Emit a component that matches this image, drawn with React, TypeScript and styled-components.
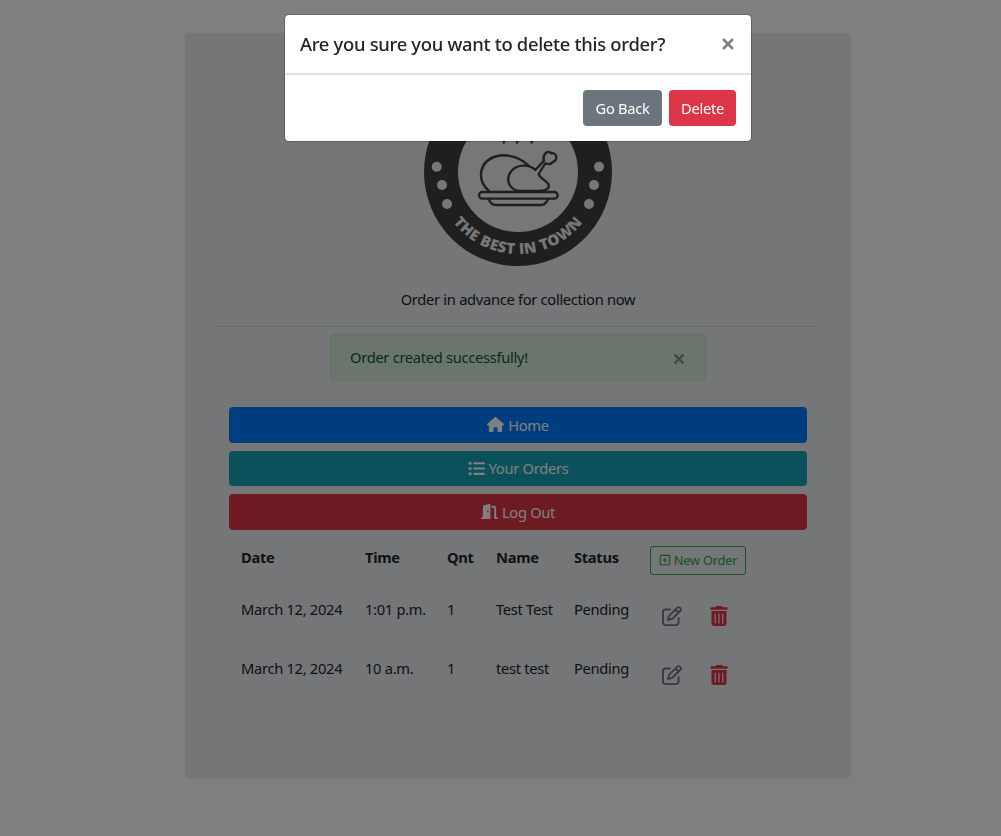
import styled, { createGlobalStyle } from "styled-components"
import { FaDoorOpen, FaHouse, FaListUl, FaRegPenToSquare, FaRegSquarePlus, FaTrashCan } from "react-icons/fa6"

const GlobalStyle = createGlobalStyle`
  html, body {
    margin: 0;
    background: #fff;
    color: #212529;
    font-family: "Noto Sans", "Open Sans", sans-serif;
    font-size: 14.7px;
    letter-spacing: -0.3px;
    line-height: 24px;
  }
`

const Backdrop = styled.div`
  position: fixed;
  inset: 0;
  background: rgba(0, 0, 0, 0.5);
`

const Modal = styled.div`
  position: fixed;
  top: 14px;
  left: 284px;
  width: 468px;
  box-sizing: border-box;
  background: #fff;
  border: 1px solid rgba(0, 0, 0, 0.2);
  border-radius: 5px;
  background-clip: padding-box;
`

const ModalHeader = styled.div`
  display: flex;
  justify-content: space-between;
  align-items: center;
  height: 58px;
  padding: 0 15px;
  border-bottom: 1px solid #dee2e6;
`

const ModalTitle = styled.h5`
  margin: 0;
  font-size: 18.4px;
  font-weight: 500;
  letter-spacing: -0.3px;
  line-height: 30px;
`

const ModalFooter = styled.div`
  display: flex;
  justify-content: flex-end;
  gap: 7px;
  padding: 15px;
  border-top: 1px solid #dee2e6;
`

const ModalButton = styled.button<{ $bg: string; $w: number }>`
  width: ${(p) => p.$w}px;
  height: 36px;
  padding: 0;
  border: 0;
  border-radius: 4px;
  background: ${(p) => p.$bg};
  color: #fff;
  font: inherit;
  letter-spacing: inherit;
`

const CloseIcon = styled.svg<{ $size: number }>`
  display: block;
  width: ${(p) => p.$size}px;
  height: ${(p) => p.$size}px;
  fill: none;
  stroke: currentColor;
  stroke-width: 2.6;
`

const CloseButton = styled.span`
  color: #808080;
`

const Card = styled.main`
  box-sizing: border-box;
  width: 666px;
  height: 746px;
  margin: 33px 150px 0 185px;
  padding: 45px 31px 0;
  background: #e9ecef;
  border-radius: 5px;
  display: flex;
  flex-direction: column;
  align-items: center;
`

const Logo = styled.svg`
  display: block;
  width: 188px;
  height: 188px;
`

const Tagline = styled.p`
  margin: 21px 0 15px;
`

const Divider = styled.hr`
  width: 604px;
  margin: 0 0 7px;
  border: 0;
  border-top: 1px solid rgba(0, 0, 0, 0.1);
`

const Alert = styled.div`
  box-sizing: border-box;
  width: 376px;
  height: 47px;
  margin-bottom: 26px;
  padding: 10px 19px 11px;
  display: flex;
  justify-content: space-between;
  align-items: center;
  background: #d4edda;
  border: 1px solid #c3e6cb;
  border-radius: 4px;
  color: #155724;
`

const AlertClose = styled.span`
  color: #7f9685;
  margin: 3px 0 0 0;
`

const NavList = styled.nav`
  width: 578px;
  display: flex;
  flex-direction: column;
  gap: 8px;
`

const NavButton = styled.a<{ $bg: string }>`
  height: 35.5px;
  display: flex;
  align-items: center;
  justify-content: center;
  gap: 4px;
  border-radius: 4px;
  background: ${(p) => p.$bg};
  color: #fff;

  svg {
    font-size: 17px;
  }
`

const Table = styled.table`
  align-self: flex-start;
  margin: 8px 0 0 13px;
  width: 529px;
  table-layout: fixed;
  border-collapse: collapse;
`

const Th = styled.th<{ $w: number }>`
  width: ${(p) => p.$w}px;
  box-sizing: border-box;
  height: 48px;
  padding: 7px 12px 0;
  text-align: left;
  vertical-align: top;
  font-weight: 700;
  white-space: nowrap;
`

const Td = styled.td`
  height: 59px;
  box-sizing: border-box;
  padding: 11px 12px 0;
  vertical-align: top;
  white-space: nowrap;
  border-top: 1px solid #dee2e6;
`

const NewOrder = styled.a`
  display: inline-flex;
  align-items: center;
  justify-content: center;
  gap: 3px;
  box-sizing: border-box;
  width: 96px;
  height: 29px;
  margin-top: 1px;
  font-size: 12.8px;
  font-weight: 400;
  letter-spacing: -0.2px;
  color: #28a745;
  border: 1px solid #28a745;
  border-radius: 3px;

  svg {
    font-size: 12px;
  }
`

const Actions = styled.div`
  display: flex;
  align-items: center;
  gap: 27px;
  padding: 9px 0 0 12px;
`

const EditIcon = styled(FaRegPenToSquare)`
  color: #6c757d;
`

const TrashIcon = styled(FaTrashCan)`
  color: #dc3545;
`

const orders = [
  { date: "March 12, 2024", time: "1:01 p.m.", qnt: 1, name: "Test Test", status: "Pending" },
  { date: "March 12, 2024", time: "10 a.m.", qnt: 1, name: "test test", status: "Pending" },
]

const Cross = ({ size }: { size: number }) => (
  <CloseIcon $size={size} viewBox="0 0 16 16">
    <path d="M3 3l10 10M13 3L3 13" />
  </CloseIcon>
)

const LogoArt = () => (
  <Logo viewBox="0 0 188 188">
    <defs>
      <path id="badge-arc" d="M12 94A82 82 0 0 0 176 94" />
    </defs>
    <circle cx="94" cy="94" r="94" fill="#3e3e3e" />
    <circle cx="94" cy="94" r="60" fill="#eee" />
    <g fill="#eee">
      <circle cx="12.7" cy="88.7" r="5" />
      <circle cx="18" cy="107" r="5" />
      <circle cx="23" cy="126" r="5" />
      <circle cx="175" cy="88.7" r="5" />
      <circle cx="170" cy="107" r="5" />
      <circle cx="165" cy="126" r="5" />
    </g>
    <g transform="translate(-14 52) scale(.3333)" fill="none" stroke="#3e3e3e" strokeWidth="7" strokeLinecap="round" strokeLinejoin="round">
      <path d="M285 25l-4 13M325 25l-4 13M369 25l-4 13" />
      <path d="M236 182C200 150 205 92 262 78C295 70 335 85 356 108" />
      <path d="M330 183C295 180 285 145 305 122C322 103 358 102 376 120L402 92C396 72 416 58 424 70C440 66 446 92 428 96C424 104 412 102 406 100L386 132C390 146 408 150 416 164C420 178 402 183 385 183Z" />
      <rect x="207" y="186" width="236" height="20" rx="10" />
      <path d="M236 207C240 218 248 225 258 225H392C402 225 410 218 414 207" />
    </g>
    <text fontFamily="'Open Sans', sans-serif" fontWeight="800" fontSize="15" letterSpacing="0.4" fill="#eee">
      <textPath href="#badge-arc" startOffset="50%" textAnchor="middle">THE BEST IN TOWN</textPath>
    </text>
  </Logo>
)

export default function App() {
  return (
    <>
      <GlobalStyle />
      <Card>
        <LogoArt />
        <Tagline>Order in advance for collection now</Tagline>
        <Divider />
        <Alert>
          Order created successfully!
          <AlertClose><Cross size={14} /></AlertClose>
        </Alert>
        <NavList>
          <NavButton $bg="#007bff"><FaHouse />Home</NavButton>
          <NavButton $bg="#17a2b8"><FaListUl />Your Orders</NavButton>
          <NavButton $bg="#dc3545"><FaDoorOpen />Log Out</NavButton>
        </NavList>
        <Table>
          <thead>
            <tr>
              <Th $w={124}>Date</Th>
              <Th $w={82}>Time</Th>
              <Th $w={49}>Qnt</Th>
              <Th $w={78}>Name</Th>
              <Th $w={76}>Status</Th>
              <Th $w={120}><NewOrder><FaRegSquarePlus />New Order</NewOrder></Th>
            </tr>
          </thead>
          <tbody>
            {orders.map((order) => (
              <tr key={order.time}>
                <Td>{order.date}</Td>
                <Td>{order.time}</Td>
                <Td>{order.qnt}</Td>
                <Td>{order.name}</Td>
                <Td>{order.status}</Td>
                <Td>
                  <Actions>
                    <EditIcon size={20} />
                    <TrashIcon size={20} />
                  </Actions>
                </Td>
              </tr>
            ))}
          </tbody>
        </Table>
      </Card>
      <Backdrop />
      <Modal>
        <ModalHeader>
          <ModalTitle>Are you sure you want to delete this order?</ModalTitle>
          <CloseButton><Cross size={16} /></CloseButton>
        </ModalHeader>
        <ModalFooter>
          <ModalButton $bg="#6c757d" $w={79}>Go Back</ModalButton>
          <ModalButton $bg="#dc3545" $w={67}>Delete</ModalButton>
        </ModalFooter>
      </Modal>
    </>
  )
}
